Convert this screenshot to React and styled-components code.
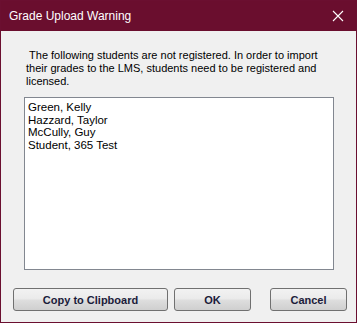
import React from "react"
import styled, { createGlobalStyle } from "styled-components"

const GlobalStyle = createGlobalStyle`
  html, body {
    margin: 0;
    padding: 0;
    background: #f0f0f0;
  }
`

const students = ["Green, Kelly", "Hazzard, Taylor", "McCully, Guy", "Student, 365 Test"]

const App = () => (
  <>
    <GlobalStyle />
    <Window>
      <TitleBar>
        <Title>Grade Upload Warning</Title>
        <CloseIcon width="12" height="12" viewBox="0 0 12 12">
          <path d="M1 1 L11 11 M11 1 L1 11" stroke="#fff" strokeWidth="1.1" />
        </CloseIcon>
      </TitleBar>
      <Body>
        <Message>
          &nbsp;The following students are not registered. In order to import their grades to the
          LMS, students need to be registered and licensed.
        </Message>
        <ListBox>
          {students.map((name) => (
            <ListItem key={name}>{name}</ListItem>
          ))}
        </ListBox>
        <ButtonRow>
          <Button width={155}>Copy to Clipboard</Button>
          <Button width={77} gap={6}>OK</Button>
          <Button width={77} gap={19}>Cancel</Button>
        </ButtonRow>
      </Body>
    </Window>
  </>
)

export default App

const Window = styled.div`
  width: 357px;
  height: 323px;
  box-sizing: border-box;
  border: 1px solid #6b0f30;
  display: flex;
  flex-direction: column;
  background: #f0f0f0;
`
const TitleBar = styled.div`
  height: 30px;
  background: #6a0e2e;
  display: flex;
  align-items: center;
  justify-content: space-between;
  padding: 0 12px 0 8px;
`
const Title = styled.span`
  color: #fff;
  font-family: "Liberation Sans", Arial, sans-serif;
  font-size: 12px;
  margin-top: -1px;
`
const CloseIcon = styled.svg`
  display: block;
  margin-top: -1px;
`
const Body = styled.div`
  flex: 1;
  display: flex;
  flex-direction: column;
  padding: 18px 0 0 0;
`
const Message = styled.p`
  margin: 0 0 9px 25px;
  width: 302px;
  font-family: "Liberation Sans", Arial, sans-serif;
  font-size: 11px;
  line-height: 13px;
  color: #000;
`
const ListBox = styled.div`
  margin-left: 23px;
  width: 310px;
  height: 173px;
  box-sizing: border-box;
  border: 1px solid #828790;
  background: #fff;
  padding: 3px 3px;
`
const ListItem = styled.div`
  font-family: "Liberation Sans", Arial, sans-serif;
  font-size: 11.5px;
  line-height: 12.5px;
  color: #000;
`
const ButtonRow = styled.div`
  display: flex;
  margin: 18px 0 0 12px;
`
const Button = styled.button`
  width: ${({ width }) => width}px;
  height: 23px;
  margin-left: ${({ gap }) => gap || 0}px;
  box-sizing: border-box;
  border: 1px solid #707070;
  border-radius: 3px;
  background: linear-gradient(#f2f2f2 0%, #ebebeb 45%, #dddddd 55%, #cfcfcf 100%);
  font-family: "Liberation Sans", Arial, sans-serif;
  font-weight: bold;
  font-size: 11px;
  color: #1b1b3a;
  padding: 0;
`
